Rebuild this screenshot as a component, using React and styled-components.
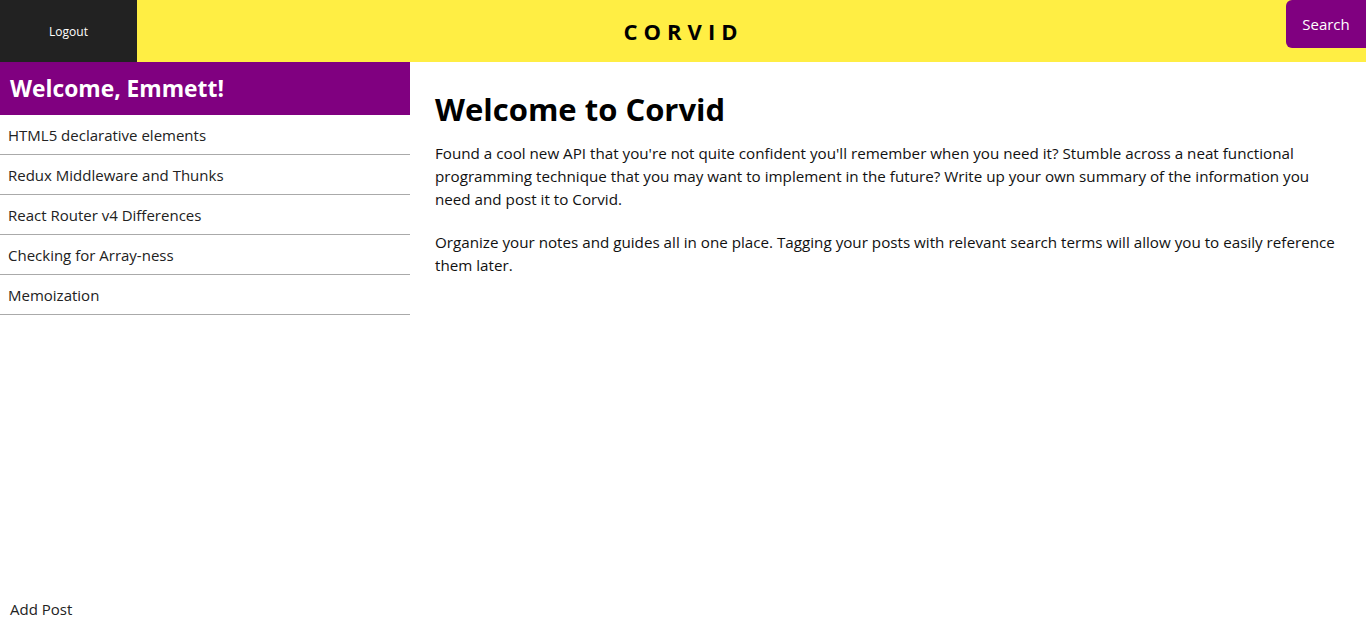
import React from 'react';
import styled, { createGlobalStyle } from 'styled-components';

const GlobalStyle = createGlobalStyle`
	html, body {
		margin: 0;
		padding: 0;
		background: #ffffff;
		font-family: 'Open Sans', 'Noto Sans', sans-serif;
		color: #111;
	}
	* {
		box-sizing: border-box;
	}
`;

const Page = styled.div`
	display: flex;
	flex-direction: column;
	height: 630px;
	overflow: hidden;
`;

const Header = styled.header`
	display: flex;
	align-items: stretch;
	height: 62px;
	background: #ffee44;
	flex-shrink: 0;
`;

const LogoutButton = styled.button`
	width: 137px;
	background: #222222;
	color: #ffffff;
	border: none;
	font-family: 'Open Sans', sans-serif;
	font-size: 12px;
	padding: 0;
	cursor: pointer;
`;

const Brand = styled.h1`
	flex: 1;
	margin: 0;
	display: flex;
	align-items: center;
	justify-content: center;
	font-size: 22px;
	font-weight: 700;
	letter-spacing: 6px;
	color: #000;
	padding-right: 56px;
`;

const SearchButton = styled.button`
	align-self: flex-start;
	width: 80px;
	height: 48px;
	background: #800080;
	color: #ffffff;
	border: none;
	border-radius: 6px 0 0 6px;
	font-family: 'Open Sans', sans-serif;
	font-size: 15px;
	cursor: pointer;
`;

const Body = styled.div`
	flex: 1;
	display: flex;
	min-height: 0;
`;

const Sidebar = styled.aside`
	width: 410px;
	display: flex;
	flex-direction: column;
	flex-shrink: 0;
`;

const Greeting = styled.h2`
	margin: 0;
	height: 53px;
	display: flex;
	align-items: center;
	padding-left: 10px;
	background: #800080;
	color: #ffffff;
	font-size: 22.8px;
	font-weight: 700;
`;

const PostList = styled.ul`
	list-style: none;
	margin: 0;
	padding: 0;
	flex: 1;
`;

const PostItem = styled.li`
	height: 40px;
	display: flex;
	align-items: center;
	padding-left: 8px;
	border-bottom: 1px solid #aaaaaa;
	font-size: 15px;
	color: #222;
	cursor: pointer;
`;

const AddPost = styled.div`
	padding: 0 0 11px 10px;
	font-size: 15px;
	color: #222;
	cursor: pointer;
`;

const Main = styled.main`
	flex: 1;
	padding: 26px 25px 0 25px;
`;

const Title = styled.h1`
	margin: 0 0 12px;
	font-size: 31px;
	font-weight: 700;
	color: #000;
`;

const Paragraph = styled.p`
	margin: 0 0 20px;
	font-size: 15.2px;
	line-height: 23px;
	color: #111;
`;

const posts = [
	'HTML5 declarative elements',
	'Redux Middleware and Thunks',
	'React Router v4 Differences',
	'Checking for Array-ness',
	'Memoization',
];

const App = () => {
	return (
		<Page>
			<GlobalStyle />
			<Header>
				<LogoutButton>Logout</LogoutButton>
				<Brand>CORVID</Brand>
				<SearchButton>Search</SearchButton>
			</Header>
			<Body>
				<Sidebar>
					<Greeting>Welcome, Emmett!</Greeting>
					<PostList>
						{posts.map((title) => (
							<PostItem key={title}>{title}</PostItem>
						))}
					</PostList>
					<AddPost>Add Post</AddPost>
				</Sidebar>
				<Main>
					<Title>Welcome to Corvid</Title>
					<Paragraph>
						Found a cool new API that you're not quite confident you'll remember
						when you need it? Stumble across a neat functional programming
						technique that you may want to implement in the future? Write up your
						own summary of the information you need and post it to Corvid.
					</Paragraph>
					<Paragraph>
						Organize your notes and guides all in one place. Tagging your posts
						with relevant search terms will allow you to easily reference them
						later.
					</Paragraph>
				</Main>
			</Body>
		</Page>
	);
};

export default App;
